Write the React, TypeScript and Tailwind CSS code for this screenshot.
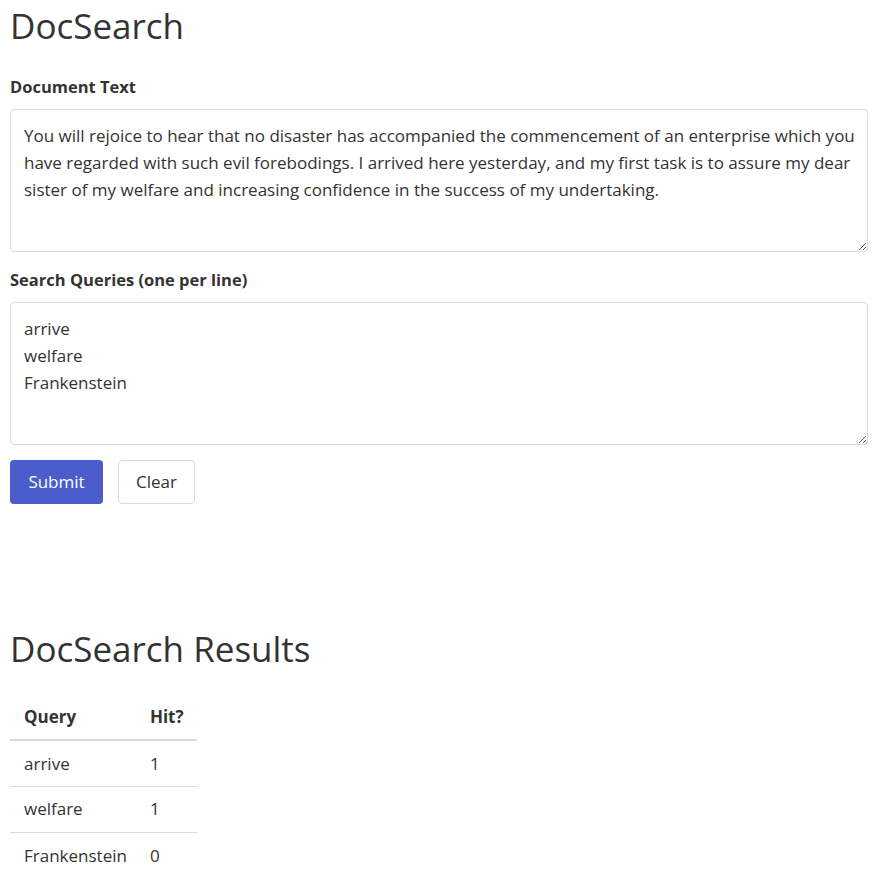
import React from "react";

const docText =
  "You will rejoice to hear that no disaster has accompanied the commencement of an enterprise which you have regarded with such evil forebodings. I arrived here yesterday, and my first task is to assure my dear sister of my welfare and increasing confidence in the success of my undertaking.";

const queries = "arrive\nwelfare\nFrankenstein";

const results = [
  { q: "arrive", hit: 1 },
  { q: "welfare", hit: 1 },
  { q: "Frankenstein", hit: 0 },
];

export default function App() {
  return (
    <div className="min-h-[870px] bg-white px-[10px] text-[17px] text-[#333] font-['Open_Sans',sans-serif]">
      <h1 className="pt-[4px] text-[35px] leading-[43px] font-normal">DocSearch</h1>

      <label className="mt-[28px] block text-[16.5px] font-bold leading-6">Document Text</label>
      <textarea
        className="mt-[10px] block h-[143px] w-[858px] rounded-[4px] border border-[#dadada] pl-[13px] pr-[6px] py-[12px] text-[17px] leading-[27px] text-[#333] outline-none"
        defaultValue={docText}
      />

      <label className="mt-[16px] block text-[16.5px] font-bold leading-6">
        Search Queries (one per line)
      </label>
      <textarea
        className="mt-[10px] block h-[143px] w-[858px] rounded-[4px] border border-[#dadada] pl-[13px] pr-[6px] py-[12px] text-[17px] leading-[27px] text-[#333] outline-none"
        defaultValue={queries}
      />

      <div className="mt-[15px] flex gap-[15px]">
        <button className="h-[44px] w-[93px] rounded-[4px] bg-[#4a5dcb] text-[17px] text-white">Submit</button>
        <button className="h-[44px] w-[77px] rounded-[4px] border border-[#dadada] bg-white text-[17px] text-[#333]">
          Clear
        </button>
      </div>

      <h2 className="mt-[123px] text-[35px] leading-[43px] font-normal">DocSearch Results</h2>

      <table className="mt-[24px] border-collapse">
        <thead>
          <tr className="border-b-2 border-[#dadada]">
            <th className="h-[46px] pl-[14px] pr-[23px] text-left font-bold">Query</th>
            <th className="h-[46px] pl-0 pr-[13px] text-left font-bold">Hit?</th>
          </tr>
        </thead>
        <tbody>
          {results.map((r, i) => (
            <tr key={r.q} className={i < results.length - 1 ? "border-b border-[#dadada]" : ""}>
              <td className="h-[46px] pl-[14px] pr-[23px]">{r.q}</td>
              <td className="h-[46px] pr-[13px]">{r.hit}</td>
            </tr>
          ))}
        </tbody>
      </table>
    </div>
  );
}
